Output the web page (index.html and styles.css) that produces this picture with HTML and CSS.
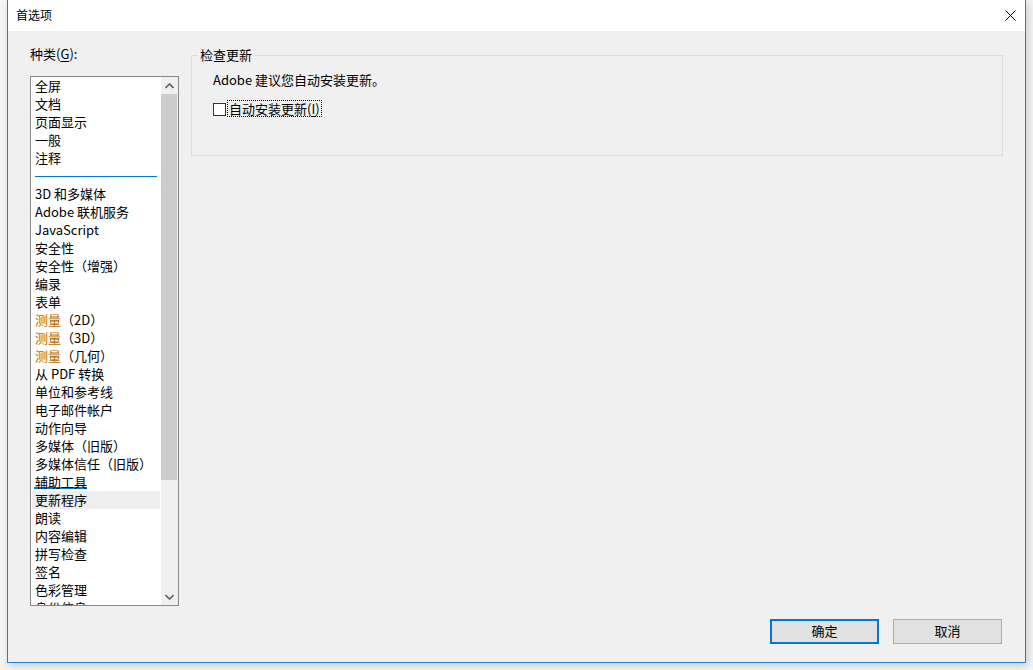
FILE: index.html
```html
<!DOCTYPE html>
<html lang="zh-CN">
<head>
<meta charset="utf-8">
<title>首选项</title>
<link rel="stylesheet" href="styles.css">
</head>
<body>
<div class="screen">
  <div class="window">
    <div class="titlebar">
      <span class="title">首选项</span>
      <svg class="close" width="11" height="11" viewBox="0 0 11 11"><path d="M0.5 0.5 L10.5 10.5 M10.5 0.5 L0.5 10.5" stroke="#000" stroke-width="1" fill="none"/></svg>
    </div>
    <div class="body">
      <div class="main">
        <div class="left">
          <div class="cat-label">种类(<u>G</u>):</div>
          <div class="listbox">
            <ul class="items">
              <li>全屏</li>
              <li>文档</li>
              <li>页面显示</li>
              <li>一般</li>
              <li>注释</li>
              <li class="sep"><span class="sep-line"></span></li>
              <li>3D 和多媒体</li>
              <li>Adobe 联机服务</li>
              <li>JavaScript</li>
              <li>安全性</li>
              <li>安全性（增强）</li>
              <li>编录</li>
              <li>表单</li>
              <li><span class="orange">测量</span>（2D）</li>
              <li><span class="orange">测量</span>（3D）</li>
              <li><span class="orange">测量</span>（几何）</li>
              <li>从 PDF 转换</li>
              <li>单位和参考线</li>
              <li>电子邮件帐户</li>
              <li>动作向导</li>
              <li>多媒体（旧版）</li>
              <li>多媒体信任（旧版）</li>
              <li><span class="drop">辅助工具</span></li>
              <li class="selected">更新程序</li>
              <li>朗读</li>
              <li>内容编辑</li>
              <li>拼写检查</li>
              <li>签名</li>
              <li>色彩管理</li>
              <li>身份信息</li>
            </ul>
            <div class="scrollbar">
              <div class="sb-btn">
                <svg width="9" height="6" viewBox="0 0 9 6"><path d="M0.5 5 L4.5 1 L8.5 5" stroke="#606060" stroke-width="1.6" fill="none"/></svg>
              </div>
              <div class="sb-track">
                <div class="sb-thumb"></div>
              </div>
              <div class="sb-btn">
                <svg width="9" height="6" viewBox="0 0 9 6"><path d="M0.5 1 L4.5 5 L8.5 1" stroke="#606060" stroke-width="1.6" fill="none"/></svg>
              </div>
            </div>
          </div>
        </div>
        <fieldset class="group">
          <legend>检查更新</legend>
          <div class="group-content">
            <div class="note">Adobe 建议您自动安装更新。</div>
            <div class="check-row">
              <span class="checkbox"></span>
              <span class="check-label">自动安装更新(<u>I</u>)</span>
            </div>
          </div>
        </fieldset>
      </div>
      <div class="footer">
        <button class="btn default">确定</button>
        <button class="btn">取消</button>
      </div>
    </div>
  </div>
</div>
</body>
</html>
```

FILE: styles.css
```css
* { box-sizing: border-box; }
html, body {
  margin: 0;
  padding: 0;
  width: 1033px;
  height: 670px;
  overflow: hidden;
  background: #f4f4f4;
  font-family: "Noto Sans CJK SC", "Noto Sans", sans-serif;
  font-size: 13px;
  color: #000;
}
.screen {
  width: 1033px;
  height: 670px;
  padding-left: 7px;
}
.window {
  width: 1019px;
  height: 663px;
  border: 1px solid #1883d7;
  border-top: none;
  background: #f0f0f0;
  display: flex;
  flex-direction: column;
  box-shadow: 2px 3px 8px rgba(0,0,0,0.16);
}
.titlebar {
  height: 31px;
  flex: none;
  background: #fff;
  display: flex;
  align-items: center;
  justify-content: space-between;
  padding-left: 8px;
  padding-right: 9px;
}
.title {
  font-size: 12px;
  line-height: 18px;
  margin-top: -1px;
}
.close {
  display: block;
  margin-top: -1px;
}
.body {
  flex: 1;
  display: flex;
  flex-direction: column;
}
.main {
  flex: 1;
  display: flex;
  align-items: flex-start;
  padding-top: 15px;
  padding-left: 22px;
  gap: 12px;
}
.left {
  width: 149px;
  flex: none;
}
.cat-label {
  line-height: 18px;
  height: 18px;
  margin-top: -1px;
  padding-bottom: 1px;
  box-sizing: content-box;
}
.cat-label u, .check-label u { text-decoration-thickness: 1px; text-underline-offset: 2px; }
.listbox {
  margin-top: 12px;
  height: 530px;
  border: 1px solid #828790;
  background: #fff;
  display: flex;
  overflow: hidden;
}
.items {
  list-style: none;
  margin: 0;
  padding: 0 1px;
  flex: 1;
  overflow: hidden;
}
.items li {
  height: 18px;
  line-height: 17px;
  padding-left: 3px;
  white-space: nowrap;
}
.items li.sep {
  padding-top: 9px;
  padding-left: 3px;
  padding-right: 3px;
}
.sep-line {
  display: block;
  height: 1px;
  width: 122px;
  background: #0078d7;
}
.items li.selected {
  background: #eeeeee;
}
.orange { color: #b86800; }
.drop {
  display: inline-block;
  height: 14px;
  border-bottom: 2px solid #0078d7;
  line-height: 17px;
  margin-left: -1px;
  padding-left: 1px;
  box-sizing: content-box;
  vertical-align: top;
}
.scrollbar {
  width: 17px;
  flex: none;
  background: #f0f0f0;
  display: flex;
  flex-direction: column;
}
.sb-btn {
  height: 17px;
  flex: none;
  display: flex;
  align-items: center;
  justify-content: center;
}
.sb-track {
  flex: 1;
}
.sb-thumb {
  height: 386px;
  margin-right: 1px;
  background: #cdcdcd;
}
.group {
  width: 812px;
  margin: 0;
  padding: 0 0 0 6px;
  border: 1px solid #dcdcdc;
  min-width: 0;
}
.group legend {
  padding: 0 2px;
  line-height: 18px;
}
.group-content {
  padding: 8px 0 37px 15px;
}
.note {
  line-height: 16px;
  height: 18px;
}
.check-row {
  margin-top: 10px;
  display: flex;
  align-items: center;
  height: 18px;
}
.checkbox {
  width: 13px;
  height: 13px;
  border: 1px solid #333;
  background: #fff;
  flex: none;
}
.check-label {
  margin-left: 2px;
  line-height: 15px;
  margin-top: -1px;
  outline: 1px dotted #000;
  outline-offset: 0;
  padding: 0 1px;
}
.footer {
  flex: none;
  display: flex;
  justify-content: flex-end;
  gap: 14px;
  padding-right: 23px;
  padding-bottom: 18px;
}
.btn {
  width: 109px;
  height: 25px;
  margin: 0;
  padding: 0 0 1px;
  font: inherit;
  color: #000;
  background: #e1e1e1;
  border: 1px solid #adadad;
  line-height: 18px;
}
.btn.default {
  border: 2px solid #0078d7;
}
```
